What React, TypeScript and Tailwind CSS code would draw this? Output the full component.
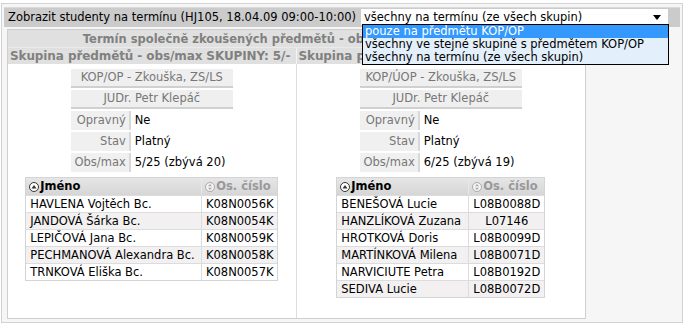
const GROUPS = [
  {
    title: "Skupina předmětů - obs/max SKUPINY: 5/-",
    course: "KOP/OP - Zkouška, ZS/LS",
    teacher: "JUDr. Petr Klepáč",
    repeat: "Ne",
    state: "Platný",
    count: "5/25 (zbývá 20)",
    nameWidth: "w-[176px]",
    students: [
      ["HAVLENA Vojtěch Bc.", "K08N0056K"],
      ["JANDOVÁ Šárka Bc.", "K08N0054K"],
      ["LEPIČOVÁ Jana Bc.", "K08N0059K"],
      ["PECHMANOVÁ Alexandra Bc.", "K08N0058K"],
      ["TRNKOVÁ Eliška Bc.", "K08N0057K"],
    ],
  },
  {
    title: "Skupina předmětů - obs/max SKUPINY: 6/-",
    course: "KOP/ÚOP - Zkouška, ZS/LS",
    teacher: "JUDr. Petr Klepáč",
    repeat: "Ne",
    state: "Platný",
    count: "6/25 (zbývá 19)",
    nameWidth: "w-[132px]",
    students: [
      ["BENEŠOVÁ Lucie", "L08B0088D"],
      ["HANZLÍKOVÁ Zuzana", "L07146"],
      ["HROTKOVÁ Doris", "L08B0099D"],
      ["MARTÍNKOVÁ Milena", "L08B0071D"],
      ["NARVICIUTE Petra", "L08B0192D"],
      ["SEDIVA Lucie", "L08B0072D"],
    ],
  },
];

const OPTIONS = [
  "pouze na předmětu KOP/OP",
  "všechny ve stejné skupině s předmětem KOP/OP",
  "všechny na termínu (ze všech skupin)",
];

function SortAsc() {
  return (
    <svg width="10" height="10" viewBox="0 0 10 10" className="mr-[1px] shrink-0">
      <circle cx="5" cy="5" r="4.5" fill="#fff" stroke="#333" />
      <path d="M2.5 6.5 L5 3 L7.5 6.5 Z" fill="#333" />
    </svg>
  );
}

function SortNone() {
  return (
    <svg width="10" height="10" viewBox="0 0 10 10" className="mr-[1px] shrink-0">
      <circle cx="5" cy="5" r="4.5" fill="#f4f4f4" stroke="#aaa" />
      <path d="M3 4.3 L5 2 L7 4.3 Z M3 5.7 L5 8 L7 5.7 Z" fill="#aaa" />
    </svg>
  );
}

function InfoRow({ label, value }: { label: string; value: string }) {
  return (
    <div className="flex h-[19px] mt-[2px]">
      <div className="w-[60px] bg-[#f0f0f0] border-r-2 border-[#d8d8d8] text-right pr-[3px] text-[#777] leading-[19px]">
        {label}
      </div>
      <div className="flex-1 bg-white pl-[4px] text-black leading-[19px] whitespace-nowrap">{value}</div>
    </div>
  );
}

function Group({ g }: { g: (typeof GROUPS)[number] }) {
  return (
    <div className="flex flex-col items-center pt-[5px]">
      <div className="w-[162px]">
        <div className="h-[19px] bg-[#efefef] border-b-2 border-[#d0d0d0] text-center text-[#777] leading-[17px] whitespace-nowrap">
          {g.course}
        </div>
        <div className="h-[19px] mt-[2px] bg-[#efefef] border-b-2 border-[#d0d0d0] text-center text-[#777] leading-[17px]">
          {g.teacher}
        </div>
        <InfoRow label="Opravný" value={g.repeat} />
        <InfoRow label="Stav" value={g.state} />
        <InfoRow label="Obs/max" value={g.count} />
      </div>
      <div className="mt-[5px] border border-[#d4d4d4]">
        <div className="flex h-[17px] bg-gradient-to-b from-[#e6e6e6] to-[#d6d6d6] font-bold leading-[17px]">
          <div className={`${g.nameWidth} flex items-center pl-[3px] border-r border-[#e8e8e8] text-black`}>
            <SortAsc />
            Jméno
          </div>
          <div className="w-[75px] flex items-center pl-[3px] text-[#999] whitespace-nowrap">
            <SortNone />
            Os. číslo
          </div>
        </div>
        {g.students.map(([name, id], i) => (
          <div
            key={id}
            className={`flex h-[17px] leading-[16px] border-t border-[#dcdcdc] ${
              i % 2 === 1 ? "bg-[#f2f0f0]" : "bg-white"
            }`}
          >
            <div className={`${g.nameWidth} pl-[4px] border-r border-[#dcdcdc] whitespace-nowrap`}>{name}</div>
            <div className="w-[75px] text-center">{id}</div>
          </div>
        ))}
      </div>
    </div>
  );
}

export default function App() {
  return (
    <div className="w-[686px] h-[328px] bg-white pt-[3px] pl-[1px] font-['DejaVu_Sans',sans-serif] text-[11.5px] text-black">
      <div className="relative w-[682px] h-[320px] border border-[#d2d2d2] bg-[#f6f6f6] pt-[3px] px-[2px]">
        <div className="flex items-start h-[20px] bg-[#cbcbcb] border-t border-[#dadada]">
          <span className="pl-[4px] leading-[19px] whitespace-nowrap">
            Zobrazit studenty na termínu (HJ105, 18.04.09 09:00-10:00)
          </span>
          <div className="relative ml-auto mr-[12px] mt-[1px] w-[307px] h-[16px] shrink-0 bg-white leading-[16px] pl-[3px]">
            všechny na termínu (ze všech skupin)
            <svg width="8" height="5" viewBox="0 0 8 5" className="absolute right-[7px] top-[6px]">
              <path d="M0 0 H8 L4 5 Z" fill="#000" />
            </svg>
            <div className="absolute z-10 left-[1px] top-[15px] w-[307px] border border-black bg-[#e3effb]">
              {OPTIONS.map((o, i) => (
                <div
                  key={o}
                  className={`h-[13px] leading-[13px] pl-[2px] whitespace-nowrap ${
                    i === 0 ? "bg-[#3399ff] text-white" : "text-black"
                  }`}
                >
                  {o}
                </div>
              ))}
            </div>
          </div>
        </div>
        <div className="ml-[3px] mt-[2px] w-[579px] h-[290px] border border-[#cfcfcf] bg-white flex flex-col">
          <div className="h-[18px] bg-[#e0e0e0] text-center font-bold text-[11.5px] text-[#808080] leading-[18px] whitespace-nowrap overflow-hidden border-b border-[#eaeaea]">
            Termín společně zkoušených předmětů - obs/max TERMÍNU: 11/40
          </div>
          <div className="flex h-[16px] bg-[#e0e0e0] font-bold text-[12px] tracking-[-0.1px] text-[#808080] leading-[16px]">
            {GROUPS.map((g, i) => (
              <div
                key={g.title}
                className={`w-[289px] pl-[2px] whitespace-nowrap overflow-hidden ${i === 0 ? "border-r border-[#f4f4f4]" : ""}`}
              >
                {g.title}
              </div>
            ))}
          </div>
          <div className="flex flex-1">
            {GROUPS.map((g, i) => (
              <div key={g.title} className={`w-[289px] ${i === 0 ? "border-r border-[#dcdcdc]" : ""}`}>
                <Group g={g} />
              </div>
            ))}
          </div>
        </div>
      </div>
    </div>
  );
}
